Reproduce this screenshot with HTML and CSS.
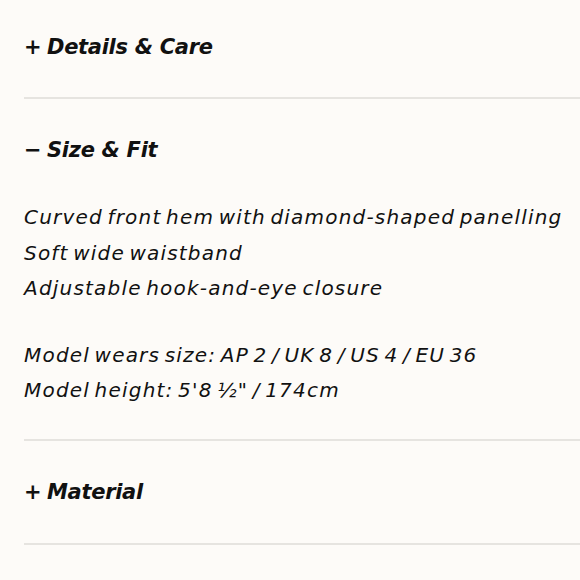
FILE: index.html
```html
<!DOCTYPE html>
<html lang="en">
<head>
    <meta charset="UTF-8">
    <meta name="viewport" content="width=device-width, initial-scale=1.0">
    <title>Product Info</title>
    <link rel="stylesheet" href="styles.css">
</head>
<body>
    <div class="accordion">
        <div class="acc-item first">
            <button class="acc-head"><span class="sign">+</span>Details &amp; Care</button>
        </div>
        <div class="acc-item open">
            <button class="acc-head"><span class="sign">&minus;</span>Size &amp; Fit</button>
            <div class="acc-body">
                <p>Curved front hem with diamond-shaped panelling<br>
                Soft wide waistband<br>
                Adjustable hook-and-eye closure</p>
                <p>Model wears size: AP 2 / UK 8 / US 4 / EU 36<br>
                Model height: 5'8 ½" / 174cm</p>
            </div>
        </div>
        <div class="acc-item">
            <button class="acc-head"><span class="sign">+</span>Material</button>
        </div>
    </div>
</body>
</html>
```

FILE: styles.css
```css
body {
    margin: 0;
    background: #fdfbf8;
    font-family: 'DejaVu Sans', sans-serif;
    color: #111;
}

.accordion {
    padding-left: 24px;
}

.acc-item {
    border-bottom: 2px solid #e6e4e0;
}

.acc-head {
    display: flex;
    align-items: center;
    width: 100%;
    text-align: left;
    background: none;
    border: none;
    padding: 36px 0 36px;
    margin: 0;
    font-family: inherit;
    font-size: 21px;
    font-style: italic;
    font-weight: 600;
    letter-spacing: -0.3px;
    line-height: 30px;
    color: #111;
    cursor: pointer;
}

.first .acc-head {
    padding-top: 32px;
    padding-bottom: 35px;
}

.open .acc-head {
    padding-bottom: 35px;
}

.sign {
    width: 23px;
    font-style: normal;
    font-weight: 700;
}

.acc-body {
    padding-bottom: 30px;
    font-size: 20px;
    font-style: italic;
    letter-spacing: 1.2px;
    word-spacing: -3px;
    line-height: 35.5px;
}

.acc-body p {
    margin: 0 0 31px;
}

.acc-body p:last-child {
    margin-bottom: 0;
}
```
